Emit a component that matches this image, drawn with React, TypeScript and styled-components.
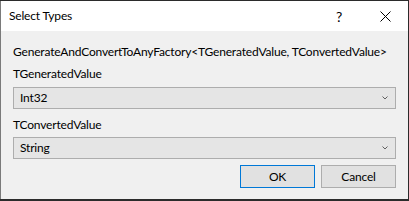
import React from "react";
import styled, { createGlobalStyle } from "styled-components";

const Global = createGlobalStyle`
  html, body { margin: 0; padding: 0; background: #2b2b2b; }
  body { width: 409px; height: 201px; overflow: hidden; }
`;

const Win = styled.div`
  margin-top: 1px;
  width: 407px;
  height: 198px;
  border-left: 1px solid #7a7a7a;
  display: flex;
  flex-direction: column;
  font-family: Lato, "Noto Sans", sans-serif;
  font-size: 12px;
  letter-spacing: -0.18px;
  color: #000;
`;

const TitleBar = styled.div`
  height: 30px;
  background: #fff;
  display: flex;
  align-items: center;
  padding-left: 8px;
`;

const Title = styled.div`
  flex: 1;
  line-height: 16px;
  padding-bottom: 1px;
`;

const CapButton = styled.div<{ $w: number }>`
  width: ${(p) => p.$w}px;
  height: 30px;
  display: flex;
  align-items: center;
  justify-content: center;
  font-size: 14px;
`;

const Body = styled.div`
  flex: 1;
  background: #f0f0f0;
  padding: 13px 12px 0 12px;
  display: flex;
  flex-direction: column;
`;

const Text = styled.div<{ $mt: number }>`
  margin-top: ${(p) => p.$mt}px;
  line-height: 16px;
  white-space: nowrap;
`;

const Combo = styled.div<{ $mt: number }>`
  margin-top: ${(p) => p.$mt}px;
  height: 20px;
  width: 375px;
  border: 1px solid #adadad;
  background: #e5e5e5;
  display: flex;
  align-items: center;
  padding-left: 6px;
  box-sizing: content-box;
  line-height: 16px;
`;

const ComboText = styled.span`
  flex: 1;
`;

const Chevron = styled.svg`
  margin-right: 7px;
`;

const Buttons = styled.div`
  margin-top: 6px;
  display: flex;
  justify-content: flex-end;
  gap: 6px;
  width: 383px;
`;

const Btn = styled.div<{ $primary?: boolean }>`
  width: 73px;
  height: 21px;
  border: 1px solid ${(p) => (p.$primary ? "#0078d7" : "#adadad")};
  background: #e1e1e1;
  display: flex;
  align-items: center;
  justify-content: center;
  line-height: 16px;
`;

function Down() {
  return (
    <Chevron width="6" height="4" viewBox="0 0 6 4">
      <path d="M0.5 0.5 L3 3 L5.5 0.5" fill="none" stroke="#606060" strokeWidth="1" />
    </Chevron>
  );
}

export default function App() {
  return (
    <>
      <Global />
      <Win>
        <TitleBar>
          <Title>Select Types</Title>
          <CapButton $w={46}>?</CapButton>
          <CapButton $w={46}>
            <svg width="11" height="11" viewBox="0 0 11 11">
              <path d="M0.5 0.5 L10.5 10.5 M10.5 0.5 L0.5 10.5" stroke="#000" strokeWidth="1" />
            </svg>
          </CapButton>
        </TitleBar>
        <Body>
          <Text $mt={0}>GenerateAndConvertToAnyFactory&lt;TGeneratedValue, TConvertedValue&gt;</Text>
          <Text $mt={6}>TGeneratedValue</Text>
          <Combo $mt={5}>
            <ComboText>Int32</ComboText>
            <Down />
          </Combo>
          <Text $mt={8}>TConvertedValue</Text>
          <Combo $mt={4}>
            <ComboText>String</ComboText>
            <Down />
          </Combo>
          <Buttons>
            <Btn $primary>OK</Btn>
            <Btn>Cancel</Btn>
          </Buttons>
        </Body>
      </Win>
    </>
  );
}
